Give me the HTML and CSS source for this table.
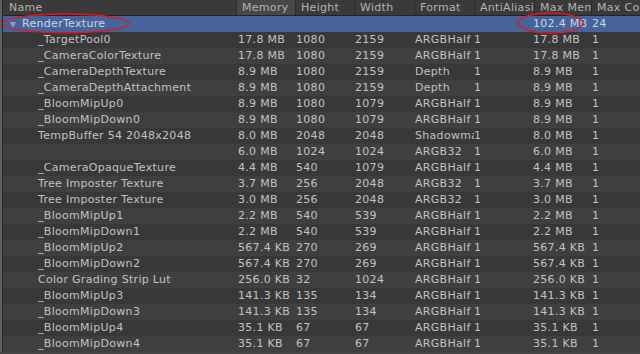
FILE: index.html
```html
<!DOCTYPE html>
<html lang="en">
<head>
  <meta charset="UTF-8" />
  <title>Memory Profiler - Render Textures</title>
  <link rel="stylesheet" href="styles.css">
</head>
<body>
  <div class="panel">
    <div class="head">
      <div class="hcell">Name</div>
      <div class="hcell sorted">Memory</div>
      <div class="hcell">Height</div>
      <div class="hcell">Width</div>
      <div class="hcell">Format</div>
      <div class="hcell">AntiAliasing</div>
      <div class="hcell">Max Memory</div>
      <div class="hcell last">Max Count</div>
    </div>

    <div class="row selected">
      <div class="cell name group"><span class="arrow"></span>RenderTexture</div>
      <div class="cell"></div>
      <div class="cell"></div>
      <div class="cell"></div>
      <div class="cell"></div>
      <div class="cell"></div>
      <div class="cell">102.4 MB</div>
      <div class="cell">24</div>
    </div>

    <div id="rows"></div>
  </div>

  <svg class="marks" width="640" height="354" viewBox="0 0 640 354">
    <ellipse cx="66" cy="23.5" rx="63" ry="9.5" />
    <ellipse cx="550.5" cy="23" rx="32.5" ry="10" />
  </svg>

  <script>
    const textures = [
      ['_TargetPool0', '17.8 MB', '1080', '2159', 'ARGBHalf', '1', '17.8 MB', '1'],
      ['_CameraColorTexture', '17.8 MB', '1080', '2159', 'ARGBHalf', '1', '17.8 MB', '1'],
      ['_CameraDepthTexture', '8.9 MB', '1080', '2159', 'Depth', '1', '8.9 MB', '1'],
      ['_CameraDepthAttachment', '8.9 MB', '1080', '2159', 'Depth', '1', '8.9 MB', '1'],
      ['_BloomMipUp0', '8.9 MB', '1080', '1079', 'ARGBHalf', '1', '8.9 MB', '1'],
      ['_BloomMipDown0', '8.9 MB', '1080', '1079', 'ARGBHalf', '1', '8.9 MB', '1'],
      ['TempBuffer 54 2048x2048', '8.0 MB', '2048', '2048', 'Shadowmap', '1', '8.0 MB', '1'],
      ['', '6.0 MB', '1024', '1024', 'ARGB32', '1', '6.0 MB', '1'],
      ['_CameraOpaqueTexture', '4.4 MB', '540', '1079', 'ARGBHalf', '1', '4.4 MB', '1'],
      ['Tree Imposter Texture', '3.7 MB', '256', '2048', 'ARGB32', '1', '3.7 MB', '1'],
      ['Tree Imposter Texture', '3.0 MB', '256', '2048', 'ARGB32', '1', '3.0 MB', '1'],
      ['_BloomMipUp1', '2.2 MB', '540', '539', 'ARGBHalf', '1', '2.2 MB', '1'],
      ['_BloomMipDown1', '2.2 MB', '540', '539', 'ARGBHalf', '1', '2.2 MB', '1'],
      ['_BloomMipUp2', '567.4 KB', '270', '269', 'ARGBHalf', '1', '567.4 KB', '1'],
      ['_BloomMipDown2', '567.4 KB', '270', '269', 'ARGBHalf', '1', '567.4 KB', '1'],
      ['Color Grading Strip Lut', '256.0 KB', '32', '1024', 'ARGBHalf', '1', '256.0 KB', '1'],
      ['_BloomMipUp3', '141.3 KB', '135', '134', 'ARGBHalf', '1', '141.3 KB', '1'],
      ['_BloomMipDown3', '141.3 KB', '135', '134', 'ARGBHalf', '1', '141.3 KB', '1'],
      ['_BloomMipUp4', '35.1 KB', '67', '67', 'ARGBHalf', '1', '35.1 KB', '1'],
      ['_BloomMipDown4', '35.1 KB', '67', '67', 'ARGBHalf', '1', '35.1 KB', '1']
    ];

    const list = document.getElementById('rows');
    textures.forEach((t, i) => {
      const row = document.createElement('div');
      row.className = 'row' + (i % 2 ? ' odd' : '');
      t.forEach((value, c) => {
        const cell = document.createElement('div');
        cell.className = c === 0 ? 'cell name' : 'cell';
        cell.textContent = value;
        row.appendChild(cell);
      });
      list.appendChild(row);
    });
  </script>
</body>
</html>
```

FILE: styles.css
```css
:root {
  --row: #383838;
  --row-alt: #3f3f3f;
  --selected: #46649a;
  --text: #c2c2c2;
  --head-text: #b2b2b2;
}

body {
  margin: 0;
  width: 640px;
  height: 354px;
  overflow: hidden;
  background: #454545;
  font-family: "DejaVu Sans", Verdana, sans-serif;
  font-size: 11px;
  letter-spacing: 0.3px;
  color: var(--text);
}

.panel {
  border-left: 2px solid #5c6068;
  height: 352px;
  overflow: hidden;
}

.head,
.row {
  display: grid;
  grid-template-columns: 235px 58px 59px 60px 59px 59px 59px 1fr;
  height: 16px;
  line-height: 16px;
  border-left: 1px solid #262626;
}

.head {
  grid-template-columns: 234px 59px 59px 60px 60px 60px 57px 1fr;
  height: 15px;
  line-height: 15px;
  background: #3a3a3a;
  border-bottom: 1px solid #242424;
}

.hcell {
  padding-left: 5px;
  color: var(--head-text);
  border-right: 1px solid #2c2c2c;
  white-space: nowrap;
  overflow: hidden;
}

.hcell:first-child {
  padding-left: 6px;
}

.hcell.sorted {
  background: #484848;
}

.hcell.last {
  border-right: none;
}

.row {
  background: var(--row);
}

.row.odd {
  background: var(--row-alt);
}

.row.selected {
  background: var(--selected);
  color: #cdd5e2;
}

.cell {
  white-space: nowrap;
  overflow: hidden;
}

.cell.name {
  padding-left: 35px;
}

.cell.name.group {
  padding-left: 19px;
  position: relative;
}

.arrow {
  position: absolute;
  left: 7px;
  top: 6px;
  width: 0;
  height: 0;
  border-left: 3.5px solid transparent;
  border-right: 3.5px solid transparent;
  border-top: 6px solid #8d9fbf;
}

.marks {
  position: absolute;
  left: 0;
  top: 0;
  pointer-events: none;
}

.marks ellipse {
  fill: none;
  stroke: #e8141a;
  stroke-width: 1.3;
}
```
